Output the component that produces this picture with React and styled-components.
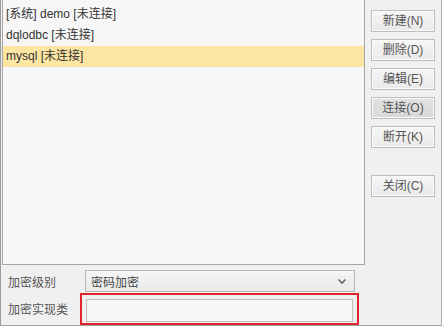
import React, { useState } from "react";
import styled, { createGlobalStyle } from "styled-components";

const GlobalStyle = createGlobalStyle`
  html, body {
    margin: 0;
    padding: 0;
    background: #f0f0f0;
  }
`;

const connections = [
  { name: "[系统] demo [未连接]" },
  { name: "dqlodbc [未连接]" },
  { name: "mysql [未连接]" },
];

const buttons = [
  { label: "新建(N)" },
  { label: "删除(D)" },
  { label: "编辑(E)" },
  { label: "连接(O)", pressed: true },
  { label: "断开(K)" },
  { label: "关闭(C)", gap: true },
];

const Chevron = () => (
  <svg width="10" height="7" viewBox="0 0 10 7">
    <path d="M1.5 1.5 L5 5 L8.5 1.5" fill="none" stroke="#666" strokeWidth="1.6" />
  </svg>
);

const App = () => {
  const [selected, setSelected] = useState(2);

  return (
    <Frame>
      <GlobalStyle />
      <Top>
        <List>
          {connections.map((c, idx) => (
            <Item key={idx} $active={idx === selected} onClick={() => setSelected(idx)}>
              {c.name}
            </Item>
          ))}
        </List>
        <Buttons>
          {buttons.map((b) => (
            <Button key={b.label} $pressed={b.pressed} $gap={b.gap}>
              {b.label}
            </Button>
          ))}
        </Buttons>
      </Top>

      <Form>
        <Row>
          <Label>加密级别</Label>
          <Select>
            <span>密码加密</span>
            <Chevron />
          </Select>
        </Row>
        <Row>
          <Label>加密实现类</Label>
          <Highlight>
            <Input />
          </Highlight>
        </Row>
      </Form>
    </Frame>
  );
};

const font = `"Liberation Sans", "Noto Sans CJK SC", sans-serif`;

const Frame = styled.div`
  box-sizing: border-box;
  width: 442px;
  height: 326px;
  border-left: 1px solid #9a9a9a;
  border-right: 1px solid #b0b0b0;
  border-bottom: 1px solid #a0a0a0;
  background: #f0f0f0;
  font-family: ${font};
  font-size: 12px;
  display: flex;
  flex-direction: column;
  overflow: hidden;
`;

const Top = styled.div`
  display: flex;
  height: 265px;
`;

const List = styled.div`
  box-sizing: border-box;
  width: 363px;
  height: 265px;
  margin-left: 1px;
  border: 1px solid #a6a6a6;
  border-top: none;
  background: #f7f7f7;
  padding-top: 4px;
`;

const Item = styled.div`
  height: 21px;
  line-height: 21px;
  padding-left: 3px;
  color: #333;
  background: ${(p) => (p.$active ? "#fce6a2" : "transparent")};
  cursor: default;
`;

const Buttons = styled.div`
  display: flex;
  flex-direction: column;
  gap: 7px;
  padding: 10px 0 0 6px;
`;

const Button = styled.button`
  box-sizing: border-box;
  width: 64px;
  height: 22px;
  margin-top: ${(p) => (p.$gap ? "20px" : "0")};
  padding: 0;
  border: 1px solid #bdbdbd;
  box-shadow: inset 0 0 0 1px #fafafa;
  background: ${(p) =>
    p.$pressed
      ? "linear-gradient(#e2e2e2, #d8d8d8)"
      : "linear-gradient(#f6f6f6, #e9e9e9)"};
  color: #555;
  font-family: ${font};
  font-size: 12px;
  line-height: 20px;
`;

const Form = styled.div`
  display: flex;
  flex-direction: column;
  padding-top: 5px;
`;

const Row = styled.div`
  display: flex;
  align-items: center;
`;

const Label = styled.span`
  box-sizing: border-box;
  width: 78px;
  padding-left: 7px;
  color: #555;
`;

const Select = styled.div`
  box-sizing: border-box;
  width: 270px;
  height: 22px;
  margin-left: 6px;
  border: 1px solid #b6b6b6;
  background: linear-gradient(#f6f6f6, #e9e9e9);
  display: flex;
  align-items: center;
  justify-content: space-between;
  padding: 0 7px 0 5px;
  color: #444;
`;

const Highlight = styled.div`
  box-sizing: border-box;
  width: 279px;
  height: 32px;
  margin: 1px 0 0 1px;
  border: 2px solid #e3232b;
  padding: 4px 4px 0 4px;
`;

const Input = styled.div`
  box-sizing: border-box;
  width: 267px;
  height: 23px;
  border: 1px solid #c9beb8;
  background: #f7f7f7;
`;

export default App;
